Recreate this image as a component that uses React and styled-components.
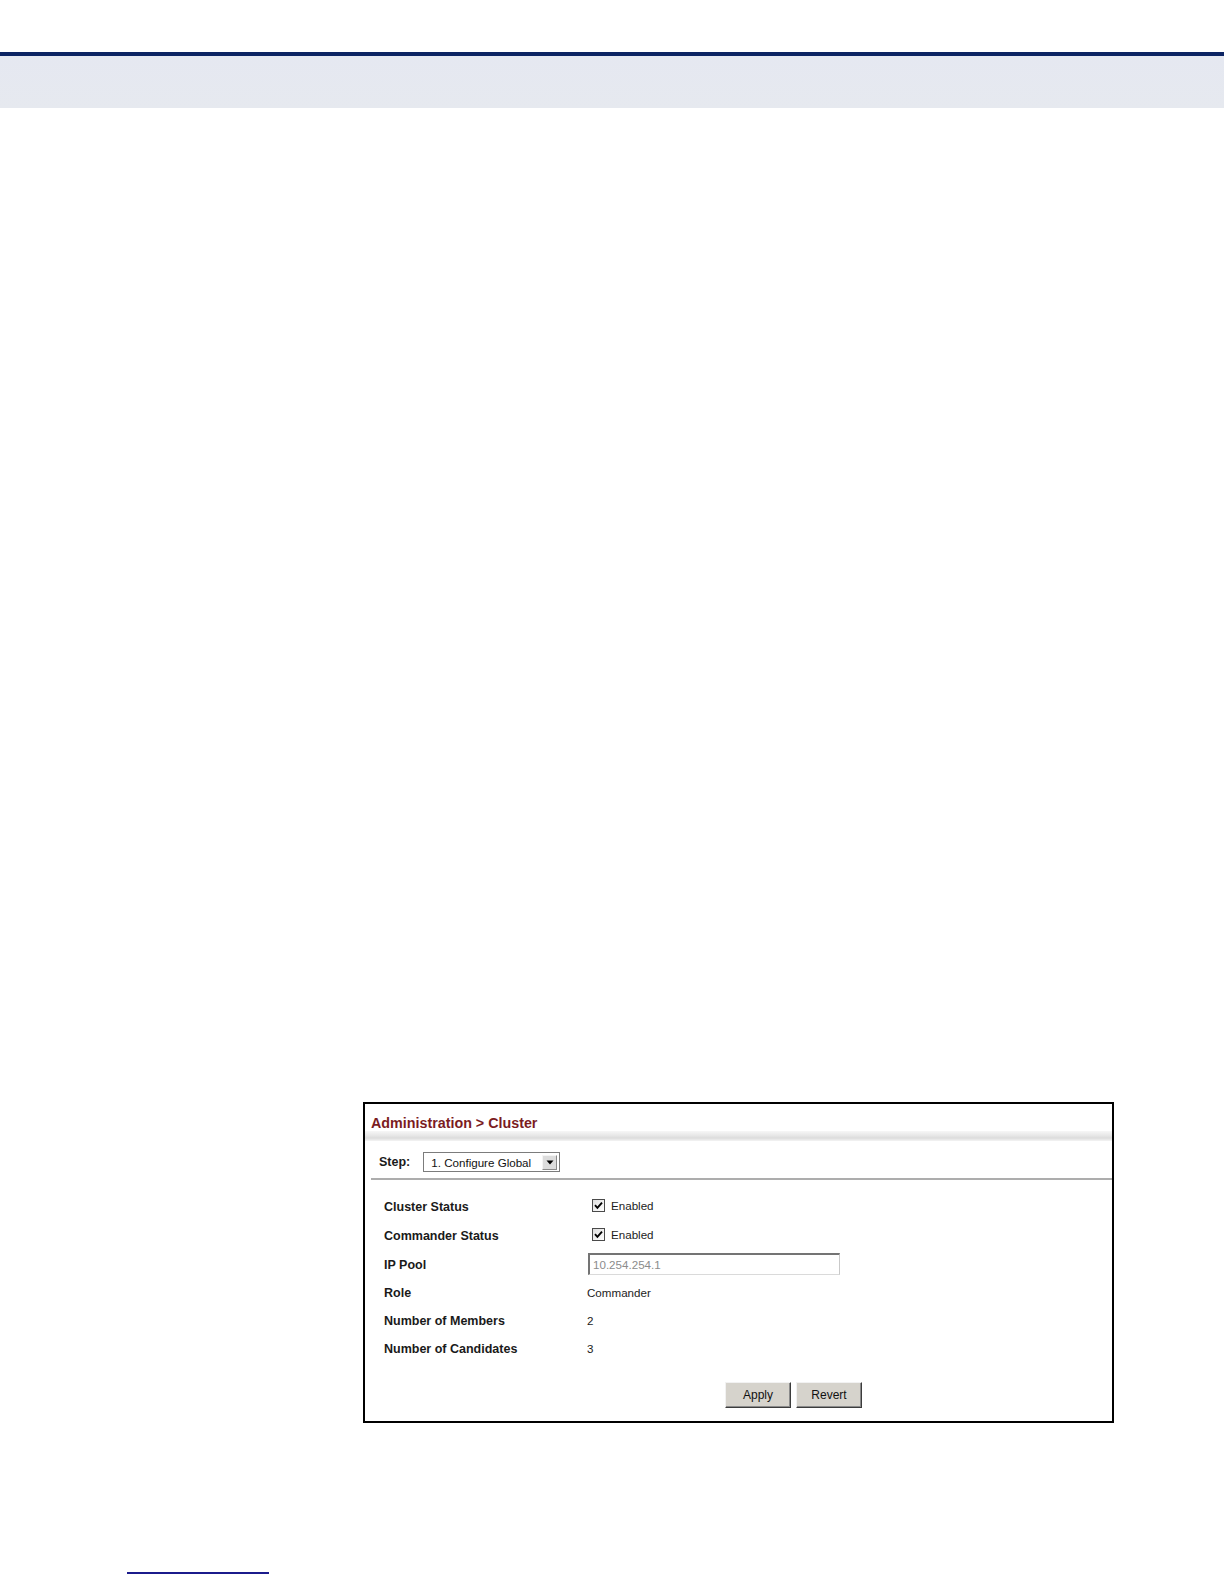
import React from "react";
import styled, { createGlobalStyle } from "styled-components";

const GlobalStyle = createGlobalStyle`
  html, body {
    margin: 0;
    padding: 0;
    background: #ffffff;
  }
  body {
    font-family: "Liberation Sans", Arial, sans-serif;
    color: #000;
  }
`;

const rows = [
  { label: "Cluster Status", kind: "check", value: "Enabled" },
  { label: "Commander Status", kind: "check", value: "Enabled" },
  { label: "IP Pool", kind: "input", value: "10.254.254.1" },
  { label: "Role", kind: "text", value: "Commander" },
  { label: "Number of Members", kind: "text", value: "2" },
  { label: "Number of Candidates", kind: "text", value: "3" },
];

function CheckMark() {
  return (
    <svg width="9" height="9" viewBox="0 0 9 9">
      <path d="M1 4.2 L3.4 6.8 L8 1.6" fill="none" stroke="#000" strokeWidth="1.9" />
    </svg>
  );
}

function DownArrow() {
  return (
    <svg width="8" height="5" viewBox="0 0 8 5">
      <path d="M0.5 0.5 H7.5 L4 4.5 Z" fill="#000" />
    </svg>
  );
}

export default function App() {
  return (
    <>
      <GlobalStyle />
      <Page>
        <TopRule />
        <HeaderBand />
        <Frame>
          <TitleBar>
            <Title>Administration &gt; Cluster</Title>
          </TitleBar>
          <TitleShadow />
          <StepRow>
            <Label>Step:</Label>
            <Select>
              <SelectText>1. Configure Global</SelectText>
              <ArrowButton>
                <DownArrow />
              </ArrowButton>
            </Select>
          </StepRow>
          <Separator />
          <Rows>
            {rows.map((row) => (
              <Row key={row.label} tall={row.kind !== "text"}>
                <LabelCell>
                  <Label>{row.label}</Label>
                </LabelCell>
                <ValueCell>
                  {row.kind === "check" && (
                    <>
                      <CheckBox>
                        <CheckMark />
                      </CheckBox>
                      <Value>{row.value}</Value>
                    </>
                  )}
                  {row.kind === "input" && <TextBox>{row.value}</TextBox>}
                  {row.kind === "text" && <Value>{row.value}</Value>}
                </ValueCell>
              </Row>
            ))}
          </Rows>
          <ButtonRow>
            <Button>Apply</Button>
            <Button>Revert</Button>
          </ButtonRow>
        </Frame>
        <FooterRule />
      </Page>
    </>
  );
}

/* The CSS */
const Page = styled.div`
  width: 1224px;
  min-height: 1584px;
  padding-top: 52px;
  box-sizing: border-box;
  overflow: hidden;
`;

const TopRule = styled.div`
  height: 4px;
  background-color: #0c2463;
`;

const HeaderBand = styled.div`
  height: 52px;
  background: linear-gradient(#e5e8f1, #e6e9ef);
`;

const Frame = styled.div`
  width: 751px;
  margin: 994px 0 0 363px;
  border: 2px solid #000;
  box-sizing: border-box;
  background: #fff;
`;

const TitleBar = styled.div`
  padding: 11px 0 0 6px;
  height: 16px;
  display: flex;
  align-items: center;
`;

const Title = styled.div`
  font-size: 14.3px;
  line-height: 16px;
  font-weight: bold;
  color: #7b1c1f;
  white-space: nowrap;
`;

const TitleShadow = styled.div`
  height: 10px;
  background: linear-gradient(#f7f7f7, #e9e9e9 40%, #dcdcdc 70%, #f4f4f4);
`;

const StepRow = styled.div`
  display: flex;
  align-items: center;
  gap: 13px;
  padding: 11px 0 6px 14px;
  height: 20px;
`;

const Label = styled.span`
  font-size: 12.5px;
  font-weight: bold;
  color: #1a1a1a;
  white-space: nowrap;
`;

const Select = styled.div`
  width: 137px;
  height: 20px;
  box-sizing: border-box;
  border: 1px solid #7c7c7c;
  display: flex;
  align-items: center;
  justify-content: space-between;
  padding: 0 2px 0 7px;
  background: #fff;
`;

const SelectText = styled.span`
  font-size: 11.6px;
  color: #111;
  white-space: nowrap;
`;

const ArrowButton = styled.span`
  width: 15px;
  height: 15px;
  box-sizing: border-box;
  display: flex;
  align-items: center;
  justify-content: center;
  background: #dcdcdc;
  border: 1px solid;
  border-color: #f4f4f4 #8a8a8a #8a8a8a #f4f4f4;
`;

const Separator = styled.div`
  height: 2px;
  margin-left: 6px;
  background: #adadad;
`;

const Rows = styled.div`
  padding: 11px 0 0 19px;
`;

const Row = styled.div`
  display: flex;
  align-items: center;
  height: ${(props) => (props.tall ? "29px" : "28px")};
`;

const LabelCell = styled.div`
  width: 203px;
  flex-shrink: 0;
`;

const ValueCell = styled.div`
  display: flex;
  align-items: center;
`;

const Value = styled.span`
  font-size: 11.6px;
  color: #1c1c1c;
  white-space: nowrap;
`;

const CheckBox = styled.span`
  width: 13px;
  height: 13px;
  box-sizing: border-box;
  margin: 0 6px 0 5px;
  border: 1px solid #4a4a4a;
  background: linear-gradient(135deg, #dedede, #ffffff);
  display: flex;
  align-items: center;
  justify-content: center;
`;

const TextBox = styled.div`
  width: 252px;
  height: 22px;
  margin-left: 1px;
  box-sizing: border-box;
  border-style: solid;
  border-width: 2px 1px 1px 2px;
  border-color: #747474 #c9c9c9 #dadada #747474;
  padding: 0 3px;
  display: flex;
  align-items: center;
  font-size: 11.6px;
  color: #8c8c8c;
`;

const ButtonRow = styled.div`
  display: flex;
  gap: 5px;
  padding: 20px 0 13px 360px;
`;

const Button = styled.div`
  width: 66px;
  height: 26px;
  box-sizing: border-box;
  display: flex;
  align-items: center;
  justify-content: center;
  background: #d6d3cc;
  border: 1px solid;
  border-color: #f2f2f2 #3c3c3c #3c3c3c #f2f2f2;
  box-shadow: inset -1px -1px 0 #8a8a8a;
  font-size: 12px;
  color: #111;
`;

const FooterRule = styled.div`
  width: 142px;
  height: 2px;
  margin: 149px 0 0 127px;
  background: #1b1b8c;
`;
